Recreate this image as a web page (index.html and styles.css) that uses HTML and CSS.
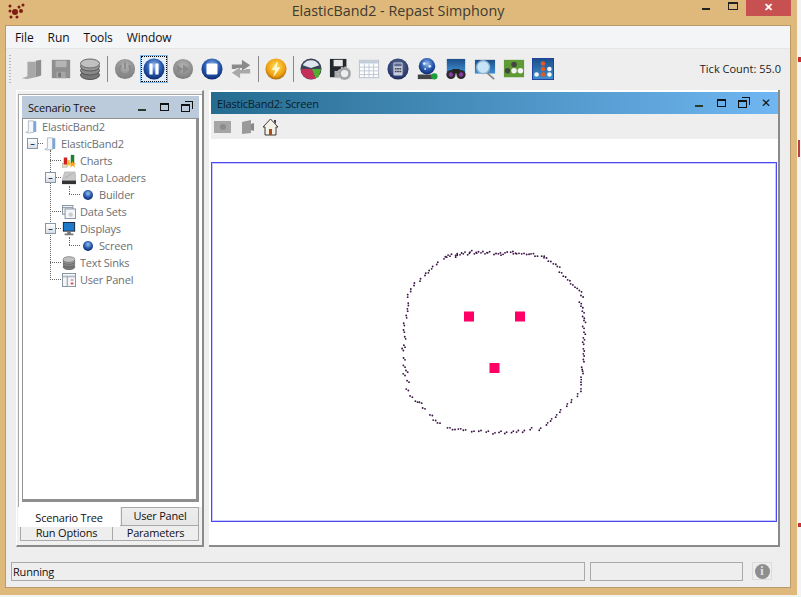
FILE: index.html
```html
<!DOCTYPE html>
<html lang="en">
<head>
    <meta charset="UTF-8">
    <meta name="viewport" content="width=device-width, initial-scale=1.0">
    <title>ElasticBand2 - Repast Simphony</title>
    <link rel="stylesheet" href="styles.css">
</head>
<body>
    <svg class="defs" width="0" height="0" aria-hidden="true">
        <defs>
            <radialGradient id="blueBall" cx="50%" cy="35%" r="65%">
                <stop offset="0" stop-color="#9cc0ee"/>
                <stop offset=".55" stop-color="#2a5cb0"/>
                <stop offset="1" stop-color="#0c2a70"/>
            </radialGradient>
            <radialGradient id="grayBall" cx="50%" cy="35%" r="65%">
                <stop offset="0" stop-color="#b5b5b5"/>
                <stop offset="1" stop-color="#7c7c7c"/>
            </radialGradient>
            <radialGradient id="navyBall" cx="50%" cy="40%" r="60%">
                <stop offset="0" stop-color="#6d7fa8"/>
                <stop offset="1" stop-color="#1c2a5c"/>
            </radialGradient>
            <radialGradient id="boltBall" cx="50%" cy="40%" r="60%">
                <stop offset="0" stop-color="#ffe15c"/>
                <stop offset=".7" stop-color="#f0a010"/>
                <stop offset="1" stop-color="#a86a10"/>
            </radialGradient>
            <linearGradient id="skyBox" x1="0" y1="0" x2="0" y2="1">
                <stop offset="0" stop-color="#1c4f8a"/>
                <stop offset="1" stop-color="#3f8fd0"/>
            </linearGradient>
            <symbol id="i-door" viewBox="0 0 24 24">
                <path d="M7 4h8l1 1v16l-9 2-6-1 6-2z" fill="#a8a8a8"/>
                <path d="M16 3l6-1v17l-6 2z" fill="#8e8e8e"/>
            </symbol>
            <symbol id="i-doc" viewBox="0 0 14 16">
                <path d="M4 1h6v13l-6 1-3-1 3-1z" fill="#f4f7fb" stroke="#9aa4b0" stroke-width=".8"/>
                <path d="M10 1l3 .5v12l-3 .5z" fill="#7ba6d8"/>
            </symbol>
            <symbol id="i-db" viewBox="0 0 20 22">
                <ellipse cx="10" cy="17" rx="9.500" ry="4.500" fill="#777" stroke="#555"/>
                <ellipse cx="10" cy="12.500" rx="9.500" ry="4.500" fill="#8a8a8a" stroke="#555"/>
                <ellipse cx="10" cy="8.500" rx="9.500" ry="4.500" fill="#999" stroke="#555"/>
                <ellipse cx="10" cy="5.500" rx="9.500" ry="4.500" fill="#c0c0c0" stroke="#666"/>
            </symbol>
            <symbol id="i-bullet" viewBox="0 0 10 10">
                <circle cx="5" cy="5" r="5" fill="url(#blueBall)"/>
            </symbol>
        </defs>
    </svg>

    <div class="window">
        <header class="titlebar">
            <svg class="app-icon" width="18" height="16" viewBox="0 0 18 16">
                <g fill="#7c1c14">
                    <circle cx="8" cy="9" r="3"/>
                    <circle cx="14" cy="8" r="2"/>
                    <circle cx="12" cy="4" r="1.500"/>
                    <circle cx="16" cy="2" r="1.500"/>
                    <circle cx="3" cy="8" r="1.500"/>
                    <circle cx="3" cy="3" r="1.500"/>
                    <circle cx="4" cy="14" r="1.500"/>
                    <circle cx="10" cy="14" r="1.500"/>
                </g>
            </svg>
            <div class="title">ElasticBand2 - Repast Simphony</div>
            <div class="win-btns">
                <span class="wb-min"></span>
                <span class="wb-max"></span>
                <span class="wb-close">✕</span>
            </div>
        </header>

        <div class="client">
            <nav class="menubar">
                <span>File</span>
                <span>Run</span>
                <span>Tools</span>
                <span>Window</span>
            </nav>

            <div class="toolbar">
                <div class="grip"></div>
                <button class="tool"><svg viewBox="0 0 24 24"><use href="#i-door"/></svg></button>
                <button class="tool"><svg viewBox="0 0 24 24"><path d="M2 2h20v20H2z" fill="#8f8f8f"/><path d="M6 3h12v7H6z" fill="#b5b5b5"/><path d="M7 15h10v7H7z" fill="#a5a5a5"/><path d="M9 16h3v5H9z" fill="#777"/></svg></button>
                <button class="tool"><svg viewBox="0 0 20 22"><use href="#i-db"/></svg></button>
                <i class="sep"></i>
                <button class="tool"><svg viewBox="0 0 24 24"><circle cx="12" cy="12" r="11" fill="url(#grayBall)"/><path d="M8 8a6 6 0 1 0 8 0" fill="none" stroke="#888" stroke-width="2"/><path d="M12 5v7" stroke="#888" stroke-width="2"/></svg></button>
                <button class="tool selected"><svg viewBox="0 0 24 24"><circle cx="12" cy="12" r="11.500" fill="url(#blueBall)"/><path d="M7 6h3.500v12H7zM13.500 6H17v12h-3.500z" fill="#fff"/></svg></button>
                <button class="tool"><svg viewBox="0 0 24 24"><circle cx="12" cy="12" r="11" fill="url(#grayBall)"/><path d="M5 7l7 5-7 5zM12 7l7 5-7 5z" fill="#8a8a8a"/></svg></button>
                <button class="tool"><svg viewBox="0 0 24 24"><circle cx="12" cy="12" r="11.500" fill="url(#blueBall)"/><rect x="6" y="6" width="12" height="12" rx="1.500" fill="#fff"/></svg></button>
                <button class="tool"><svg viewBox="0 0 24 24"><path d="M2 12V7h11V2l9 6-9 6v-3H7v1z" fill="#8a8a8a"/><path d="M22 12v5H11v5l-9-6 9-6v3h6v-1z" fill="#a8a8a8"/></svg></button>
                <i class="sep"></i>
                <button class="tool"><svg viewBox="0 0 24 24"><circle cx="12" cy="12" r="11.500" fill="url(#boltBall)"/><path d="M14 3l-7 10h4l-2 8 8-11h-4z" fill="#fff7d0"/></svg></button>
                <i class="sep"></i>
                <button class="tool"><svg viewBox="0 0 24 24"><circle cx="12" cy="12" r="11.500" fill="#3c4458"/><path d="M3 8a10 10 0 0 1 18 0l-9 3z" fill="#dfe6ee"/><path d="M1 12l12 0 4 10a11 11 0 0 1-16-10z" fill="#c43058"/><path d="M13 12h10l-3 9-3 1z" fill="#52b030"/></svg></button>
                <button class="tool"><svg viewBox="0 0 24 24"><path d="M1 1h18v20H1z" fill="#23282e"/><path d="M5 2h10v7H5z" fill="#e8e8e8"/><path d="M6 14h7v7H6z" fill="#aaa"/><circle cx="17" cy="17" r="5.500" fill="#eee" stroke="#a0a4a8" stroke-width="3"/><circle cx="17" cy="17" r="7" fill="none" stroke="#c8cacc" stroke-width="1.500" stroke-dasharray="2 2"/></svg></button>
                <button class="tool"><svg viewBox="0 0 24 24"><rect x="1.500" y="2.500" width="21" height="19" fill="#fdfdfe" stroke="#b5bfcc"/><path d="M2 3h20v3H2z" fill="#c4cddb"/><path d="M2 10h20M2 14h20M2 18h20M7 6v15M12 6v15M17 6v15" stroke="#bcc6d4"/></svg></button>
                <button class="tool"><svg viewBox="0 0 24 24"><circle cx="12" cy="12" r="11.500" fill="url(#navyBall)"/><rect x="7" y="5" width="10" height="14" rx="1" fill="#c6cddb"/><path d="M8 6h8v3H8z" fill="#5c6a90"/><path d="M8.500 11h2v1.500h-2zM11 11h2v1.500h-2zM13.500 11h2v1.500h-2zM8.500 14h2v1.500h-2zM11 14h2v1.500h-2zM13.500 14h2v1.500h-2z" fill="#445"/></svg></button>
                <button class="tool"><svg viewBox="0 0 24 24"><circle cx="12" cy="9" r="9" fill="url(#blueBall)"/><circle cx="9" cy="6" r="1.500" fill="#dfeaff"/><circle cx="15" cy="9" r="1.500" fill="#dfeaff"/><circle cx="10" cy="12" r="1" fill="#dfeaff"/><path d="M2 18h17v5H2z" fill="#444"/><circle cx="20" cy="20" r="3.500" fill="#1e9e3a"/></svg></button>
                <button class="tool"><svg viewBox="0 0 24 24"><path d="M2 1h20v15H2z" fill="url(#skyBox)"/><circle cx="6.500" cy="18" r="5" fill="#2a2a2e"/><circle cx="17.500" cy="18" r="5" fill="#2a2a2e"/><circle cx="6.500" cy="18" r="2.500" fill="#8a3aa0"/><circle cx="17.500" cy="18" r="2.500" fill="#8a3aa0"/><path d="M8 12h8v5H8z" fill="#222"/></svg></button>
                <button class="tool"><svg viewBox="0 0 24 24"><path d="M1 2h22v15H1z" fill="url(#skyBox)"/><path d="M14 16l8 7" stroke="#888" stroke-width="2"/><circle cx="10" cy="10" r="7" fill="#c7e3f7" stroke="#8eb4d0" stroke-width="1.500"/></svg></button>
                <button class="tool"><svg viewBox="0 0 24 24"><rect x="1" y="2" width="22" height="19" fill="#5f9a35"/><circle cx="12" cy="7" r="3" fill="#444"/><circle cx="5" cy="14" r="3" fill="#444"/><circle cx="12" cy="14" r="3" fill="#f4f4f4"/><circle cx="19" cy="14" r="3" fill="#f4f4f4"/></svg></button>
                <button class="tool"><svg viewBox="0 0 24 24"><rect x=".5" y=".5" width="23" height="23" fill="url(#skyBox)" stroke="#1c3a9c"/><circle cx="12" cy="6" r="2.500" fill="#e05a28"/><circle cx="12" cy="12" r="2.500" fill="#e05a28"/><circle cx="12" cy="18" r="2.500" fill="#e05a28"/><circle cx="5" cy="18" r="2.500" fill="#f4f4f4"/><circle cx="19" cy="18" r="2.500" fill="#f4f4f4"/><circle cx="19" cy="12" r="2.500" fill="#f4f4f4"/></svg></button>
                <div class="tick">Tick Count: 55.0</div>
            </div>

            <main class="workspace">
                <section class="side-frame">
                    <div class="side-inner">
                        <div class="side-title">
                            <span>Scenario Tree</span>
                            <div class="frame-btns">
                                <i class="fb-min"></i>
                                <i class="fb-max"></i>
                                <i class="fb-restore"></i>
                            </div>
                        </div>
                        <div class="tree">
                            <div class="row l0"><svg class="ti" viewBox="0 0 14 16"><use href="#i-doc"/></svg><span>ElasticBand2</span></div>
                            <div class="row l1 open"><svg class="ti" viewBox="0 0 14 16"><use href="#i-doc"/></svg><span>ElasticBand2</span></div>
                            <ul class="branch">
                                <li class="row l2"><svg class="ti" viewBox="0 0 16 16"><path d="M0 11h6v4H0z" fill="#f0e6c0" stroke="#888" stroke-width=".6"/><path d="M2 4h4v8H2z" fill="#d02020"/><path d="M6 7h3v6H6z" fill="#f0c020"/><path d="M10 1h4v10h-4z" fill="#208030"/><path d="M12 8l1 2.500h3l-2 2 1 3-3-2-3 2 1-3-2-2h3z" fill="#f4a818"/></svg><span>Charts</span></li>
                                <li class="row l2 open"><svg class="ti" viewBox="0 0 16 16"><path d="M3 1h12l1 10H0z" fill="#c8c8c8" stroke="#999" stroke-width=".5"/><path d="M0 11h16v4H0z" fill="#333"/><path d="M3 8l5-3 4-2" stroke="#aaa" fill="none"/></svg><span>Data Loaders</span></li>
                                <li class="row l3"><svg class="ti" viewBox="0 0 14 14"><use href="#i-bullet" x="2" y="2" width="10" height="10"/></svg><span>Builder</span></li>
                                <li class="row l2"><svg class="ti" viewBox="0 0 16 16"><rect x=".5" y=".5" width="12" height="10" fill="#eef2f7" stroke="#7d8a9a"/><path d="M1 3h11" stroke="#7d8a9a"/><rect x="3.500" y="4.500" width="12" height="11" fill="#f4f6f9" stroke="#7d8a9a"/><circle cx="10" cy="11" r="2.500" fill="#ccc"/></svg><span>Data Sets</span></li>
                                <li class="row l2 open"><svg class="ti" viewBox="0 0 16 16"><rect x="1" y="0" width="14" height="11" fill="#223"/><rect x="2" y="1" width="12" height="9" fill="#1f78c8"/><path d="M6 11h4v2H6zM3 13h10v2H3z" fill="#777"/></svg><span>Displays</span></li>
                                <li class="row l3"><svg class="ti" viewBox="0 0 14 14"><use href="#i-bullet" x="2" y="2" width="10" height="10"/></svg><span>Screen</span></li>
                                <li class="row l2"><svg class="ti" viewBox="0 0 20 22"><use href="#i-db"/></svg><span>Text Sinks</span></li>
                                <li class="row l2"><svg class="ti" viewBox="0 0 16 16"><rect x=".5" y=".5" width="15" height="15" fill="#f4f6f9" stroke="#7d8a9a"/><path d="M1 4h14" stroke="#b0bcca" stroke-width="2"/><path d="M6 4v11" stroke="#7d8a9a"/><path d="M10 7h3v2h-3z" fill="#c8a0b0"/><path d="M10 11h3v2h-3z" fill="#d84848"/></svg><span>User Panel</span></li>
                            </ul>
                        </div>
                    </div>
                    <div class="tabs">
                        <div class="tab-row upper">
                            <div class="tab active">Scenario Tree</div>
                            <div class="tab up">User Panel</div>
                        </div>
                        <div class="tab-row lower">
                            <div class="tab run">Run Options</div>
                            <div class="tab params">Parameters</div>
                        </div>
                    </div>
                </section>

                <section class="screen-frame">
                    <div class="screen-title">
                        <span>ElasticBand2: Screen</span>
                        <div class="frame-btns">
                            <i class="fb-min"></i>
                            <i class="fb-max"></i>
                            <i class="fb-restore"></i>
                            <i class="fb-close">✕</i>
                        </div>
                    </div>
                    <div class="screen-tools">
                        <svg width="18" height="16" viewBox="0 0 18 16"><rect x="0" y="2" width="17" height="12" fill="#a5a5a5"/><circle cx="9" cy="8" r="3" fill="#8c8c8c"/></svg>
                        <svg width="16" height="16" viewBox="0 0 16 16"><path d="M3 3l9-2v13l-9 1z" fill="#9a9a9a"/><path d="M12 5l3-1v8l-3-1z" fill="#888"/></svg>
                        <svg width="17" height="18" viewBox="0 0 17 18"><path d="M8.500 1L1 9h2v8h11V9h2z" fill="#f5f1e6" stroke="#3a3a3a"/><path d="M7 11h3v6H7z" fill="#a8501c"/><path d="M12 2h2v4l-2-2z" fill="#444"/></svg>
                    </div>
                    <div class="screen-body">
                        <div class="canvas">
                            <svg class="plot" viewBox="212 163 564 357">
                                <g transform="translate(395 240) scale(.3333)">
                                    <path id="ring" class="ring" d="M147 55h.1M155 50h.1M165 47h.1M182 45h.1M182 50h.1M195 43h.1M205 40h.1M218 43h.1M225 35h.1M238 40h.1M245 38h.1M258 37h.1M270 40h.1M278 37h.1M297 42h.1M310 40h.1M318 44h.1M330 37h.1M347 35h.1M355 40h.1M365 40h.1M380 40h.1M395 42h.1M408 40h.1M420 47h.1M440 47h.1M447 52h.1M460 62h.1M475 70h.1M487 78h.1M493 95h.1M505 107h.1M518 118h.1M527 130h.1M540 140h.1M553 150h.1M558 165h.1M553 185h.1M558 197h.1M562 212h.1M563 228h.1M567 240h.1M563 258h.1M567 275h.1M565 292h.1M563 305h.1M565 325h.1M565 340h.1M565 357h.1M560 380h.1M563 392h.1M558 410h.1M558 425h.1M558 445h.1M548 460h.1M530 478h.1M517 490h.1M497 508h.1M485 523h.1M470 535h.1M458 547h.1M437 563h.1M410 562h.1M388 570h.1M370 570h.1M355 572h.1M335 575h.1M318 572h.1M300 577h.1M280 572h.1M258 570h.1M237 572h.1M212 568h.1M197 565h.1M180 567h.1M165 562h.1M135 548h.1M122 540h.1M112 525h.1M90 505h.1M80 488h.1M68 485h.1M52 470h.1M40 450h.1M42 425h.1M30 405h.1M38 395h.1M30 380h.1M30 358h.1M25 330h.1M30 320h.1M32 295h.1M28 275h.1M28 255h.1M35 232h.1M38 212h.1M40 195h.1M38 170h.1M47 153h.1M57 135h.1M75 122h.1M90 105h.1M100 97h.1M110 85h.1M125 72h.1"/>
                                    <use href="#ring" transform="translate(296 305) rotate(1.300) scale(1.012) translate(-296 -305)"/>
                                </g>
                                <rect class="agent" x="464" y="311" width="10" height="10"/>
                                <rect class="agent" x="515" y="311" width="10" height="10"/>
                                <rect class="agent" x="489.500" y="362.500" width="10" height="10"/>
                            </svg>
                        </div>
                    </div>
                </section>
            </main>

            <footer class="statusbar">
                <div class="status-main">Running</div>
                <div class="status-side"></div>
                <div class="status-info"><span>i</span></div>
            </footer>
        </div>
    </div>

    <div class="edge-mark m1"></div>
    <div class="edge-mark m2"></div>
    <div class="edge-mark m3"></div>
</body>
</html>
```

FILE: styles.css
```css
html, body {
    margin: 0;
    height: 100%;
    overflow: hidden;
}
body {
    background-color: #f3f3f3;
    font-family: "Open Sans", "Noto Sans", sans-serif;
    font-size: 12px;
    color: #111;
}
.defs {
    position: absolute;
}
.window {
    width: 797px;
    height: 595px;
    background-color: #deb97b;
    display: flex;
    flex-direction: column;
}
.titlebar {
    height: 25px;
    position: relative;
    flex: none;
}
.app-icon {
    position: absolute;
    left: 7px;
    top: 3px;
}
.title {
    text-align: center;
    font-size: 14.3px;
    line-height: 22px;
    color: #3f3a30;
    padding-right: 1px;
}
.win-btns span {
    position: absolute;
}
.wb-min {
    left: 702px;
    top: 8px;
    width: 8px;
    height: 2px;
    background: #222;
}
.wb-max {
    left: 728px;
    top: 2px;
    width: 8px;
    height: 5px;
    border: 1px solid #222;
    border-top-width: 2px;
}
.wb-close {
    left: 746px;
    top: 0;
    width: 45px;
    height: 16px;
    background: #c75050;
    color: #fff;
    font-size: 11px;
    line-height: 13px;
    font-weight: bold;
    text-align: center;
}
.client {
    flex: 1;
    margin: 0 6px 7px 5px;
    border: 1px solid #b89b68;
    background-color: #eeeeee;
    display: flex;
    flex-direction: column;
    min-height: 0;
}
.menubar {
    height: 22px;
    flex: none;
    background-color: #f4f5f7;
    border-bottom: 1px solid #e6e6e6;
    display: flex;
    align-items: center;
    gap: 14px;
    padding-left: 9px;
    font-size: 12px;
    letter-spacing: -.1px;
    color: #111;
}
.toolbar {
    height: 39px;
    flex: none;
    display: flex;
    align-items: center;
    padding-left: 3px;
    padding-right: 9px;
}
.grip {
    width: 2px;
    height: 28px;
    margin-right: 7px;
    background: repeating-linear-gradient(#b5b5b5 0 1px, transparent 1px 3px);
}
.tool {
    width: 28px;
    height: 28px;
    margin-right: 1px;
    padding: 2px;
    border: 1px solid transparent;
    background: none;
    display: flex;
}
.tool svg {
    width: 100%;
    height: 100%;
}
.tool.selected {
    border-color: #7db8ea;
    background-color: #e4eef8;
    outline: 1px dotted #000;
    outline-offset: -2px;
}
.sep {
    width: 1px;
    height: 26px;
    background: #8a8a8a;
    margin: 0 3px 0 2px;
}
.tick {
    margin-left: auto;
    font-size: 11px;
    color: #222;
}
.workspace {
    flex: 1;
    display: flex;
    gap: 5px;
    padding: 2px 0 0 10px;
    min-height: 0;
}
.side-frame {
    box-sizing: border-box;
    flex: none;
    width: 188px;
    height: 457px;
    padding: 3px 0 4px 1px;
    background: #f0f0f0;
    border-top: 1px solid #fff;
    border-left: 1px solid #fff;
    border-right: 2px solid #8a8a8a;
    border-bottom: 2px solid #8a8a8a;
    display: flex;
    flex-direction: column;
}
.side-inner {
    flex: 1;
    min-height: 0;
    background: #fff;
    border-top: 1px solid #a8a8a8;
    border-left: 1px solid #a8a8a8;
    padding: 1px 3px 5px 3px;
    display: flex;
    flex-direction: column;
}
.side-title {
    height: 22px;
    flex: none;
    background-color: #bccbdb;
    display: flex;
    align-items: center;
    justify-content: space-between;
    padding-left: 6px;
    padding-right: 9px;
    font-size: 11px;
    letter-spacing: -.2px;
}
.frame-btns {
    display: flex;
    align-items: center;
    gap: 12px;
}
.frame-btns i {
    display: block;
    box-sizing: border-box;
    font-style: normal;
}
.fb-min {
    width: 8px;
    height: 2px;
    margin-top: 6px;
    margin-right: 2px;
    background: #2c3a2c;
}
.fb-max {
    width: 9px;
    height: 8px;
    border: 1px solid #111;
    border-top-width: 2px;
}
.fb-restore {
    width: 9px;
    height: 8px;
    border: 1px solid #111;
    border-top-width: 2px;
    position: relative;
    margin-top: 2px;
}
.fb-restore::after {
    content: "";
    position: absolute;
    right: -4px;
    top: -5px;
    width: 8px;
    height: 8px;
    border-top: 1px solid #111;
    border-right: 1px solid #111;
    box-sizing: border-box;
}
.fb-close {
    width: 10px;
    margin-left: 2px;
    font-size: 12px;
    line-height: 10px;
    color: #111;
}
.tree {
    flex: 1;
    background: #fff;
    border: 1px solid #8f8f8f;
    border-right-width: 3px;
    border-bottom-width: 3px;
    min-height: 0;
}
.tree ul {
    list-style: none;
    margin: 0;
    padding: 0;
    position: relative;
}
.branch::before {
    content: "";
    position: absolute;
    left: 27px;
    top: -2px;
    bottom: 8px;
    border-left: 1px dotted #666;
}
.row {
    height: 17px;
    display: flex;
    align-items: center;
    gap: 4px;
    position: relative;
    color: #6c7075;
    font-size: 11px;
    letter-spacing: -.2px;
}
.ti {
    width: 14px;
    height: 14px;
    flex: none;
}
.l0 { padding-left: 1px; margin-top: -1px; }
.l1 { padding-left: 20px; }
.l2 { padding-left: 39px; }
.l3 { padding-left: 58px; }
.l1::before, .l2::before, .l3::before {
    content: "";
    position: absolute;
    top: 8px;
    width: 11px;
    border-top: 1px dotted #666;
}
.l1::before { left: 9px; }
.l2::before { left: 27px; }
.l3::before { left: 46px; }
.l3::after {
    content: "";
    position: absolute;
    left: 46px;
    top: 0;
    height: 8px;
    border-left: 1px dotted #666;
}
.open > span::before {
    content: "–";
    position: absolute;
    width: 9px;
    height: 9px;
    top: 3px;
    border: 1px solid #8796a6;
    background: linear-gradient(#fff, #d8dee6);
    color: #1c3a6c;
    font-size: 9px;
    line-height: 9px;
    font-weight: bold;
    text-align: center;
    z-index: 1;
}
.l1.open > span::before { left: 4px; }
.l2.open > span::before { left: 22px; }
.tabs {
    flex: none;
    height: 34px;
    margin: 0 3px 0 4px;
    display: flex;
    flex-direction: column;
}
.tab-row {
    display: flex;
}
.tab {
    box-sizing: border-box;
    text-align: center;
    font-size: 11px;
    letter-spacing: -.2px;
    background: #eeeeee;
    border: 1px solid #a9a9a9;
}
.upper {
    height: 18px;
}
.lower {
    height: 16px;
}
.tab.active {
    width: 102px;
    height: 20px;
    line-height: 22px;
    margin-left: -4px;
    background: #fff;
    border: none;
    position: relative;
    z-index: 1;
}
.tab.up {
    width: 78px;
    height: 18px;
    line-height: 16px;
    border-bottom: none;
    margin-left: 1px;
    background: linear-gradient(#eee, #e6e6e6);
}
.tab.run {
    width: 93px;
    height: 16px;
    line-height: 14px;
    margin-left: -2px;
}
.tab.params {
    width: 86px;
    height: 16px;
    line-height: 14px;
    border-left: none;
}
.screen-frame {
    box-sizing: border-box;
    flex: none;
    width: 571px;
    height: 457px;
    padding: 2px 0 0 2px;
    background: #fff;
    border-right: 2px solid #8a8a8a;
    border-bottom: 2px solid #8a8a8a;
    display: flex;
    flex-direction: column;
}
.screen-title {
    height: 22px;
    flex: none;
    background: linear-gradient(90deg, #256c90, #70b6f2);
    display: flex;
    align-items: center;
    justify-content: space-between;
    padding: 0 7px 0 6px;
    font-size: 11px;
    letter-spacing: -.2px;
    color: #0c1c28;
}
.screen-tools {
    height: 25px;
    flex: none;
    background: #eeeeee;
    display: flex;
    align-items: center;
    gap: 7px;
    padding-left: 3px;
}
.screen-body {
    flex: 1;
    padding: 23px 1px 0 0;
    min-height: 0;
}
.canvas {
    box-sizing: border-box;
    height: 360px;
    border: 1px solid #4a4af0;
    box-shadow: inset 0 0 0 1px #c8c8ff;
    background: #fff;
}
.plot {
    display: block;
    width: 100%;
    height: 100%;
}
.ring {
    fill: none;
    stroke: #3c1848;
    stroke-width: 5.500;
    stroke-linecap: round;
}
.agent {
    fill: #ff0066;
}
.statusbar {
    height: 19px;
    flex: none;
    margin-top: 15px;
    margin-bottom: 6px;
    display: flex;
    padding-left: 5px;
    align-items: stretch;
}
.status-main, .status-side {
    box-sizing: border-box;
    border: 1px solid #a9a9a9;
    font-size: 11px;
    letter-spacing: -.2px;
    line-height: 17px;
    padding-left: 1px;
}
.status-main {
    width: 574px;
}
.status-side {
    width: 153px;
    margin-left: 5px;
}
.status-info {
    box-sizing: border-box;
    width: 20px;
    height: 18px;
    margin-left: 9px;
    border: 1px solid #dcdcdc;
    display: flex;
    align-items: center;
    justify-content: center;
}
.status-info span {
    width: 15px;
    height: 15px;
    border-radius: 50%;
    background: #8e8e8e;
    color: #e4e4e4;
    font-family: "Liberation Serif", serif;
    font-weight: bold;
    font-size: 12px;
    line-height: 15px;
    text-align: center;
}
.edge-mark {
    position: absolute;
    left: 798px;
    width: 3px;
    background: #c83030;
}
.m1 { top: 57px; height: 5px; }
.m2 { top: 140px; height: 17px; width: 2px; background: #b84040; }
.m3 { top: 523px; height: 4px; }
```
